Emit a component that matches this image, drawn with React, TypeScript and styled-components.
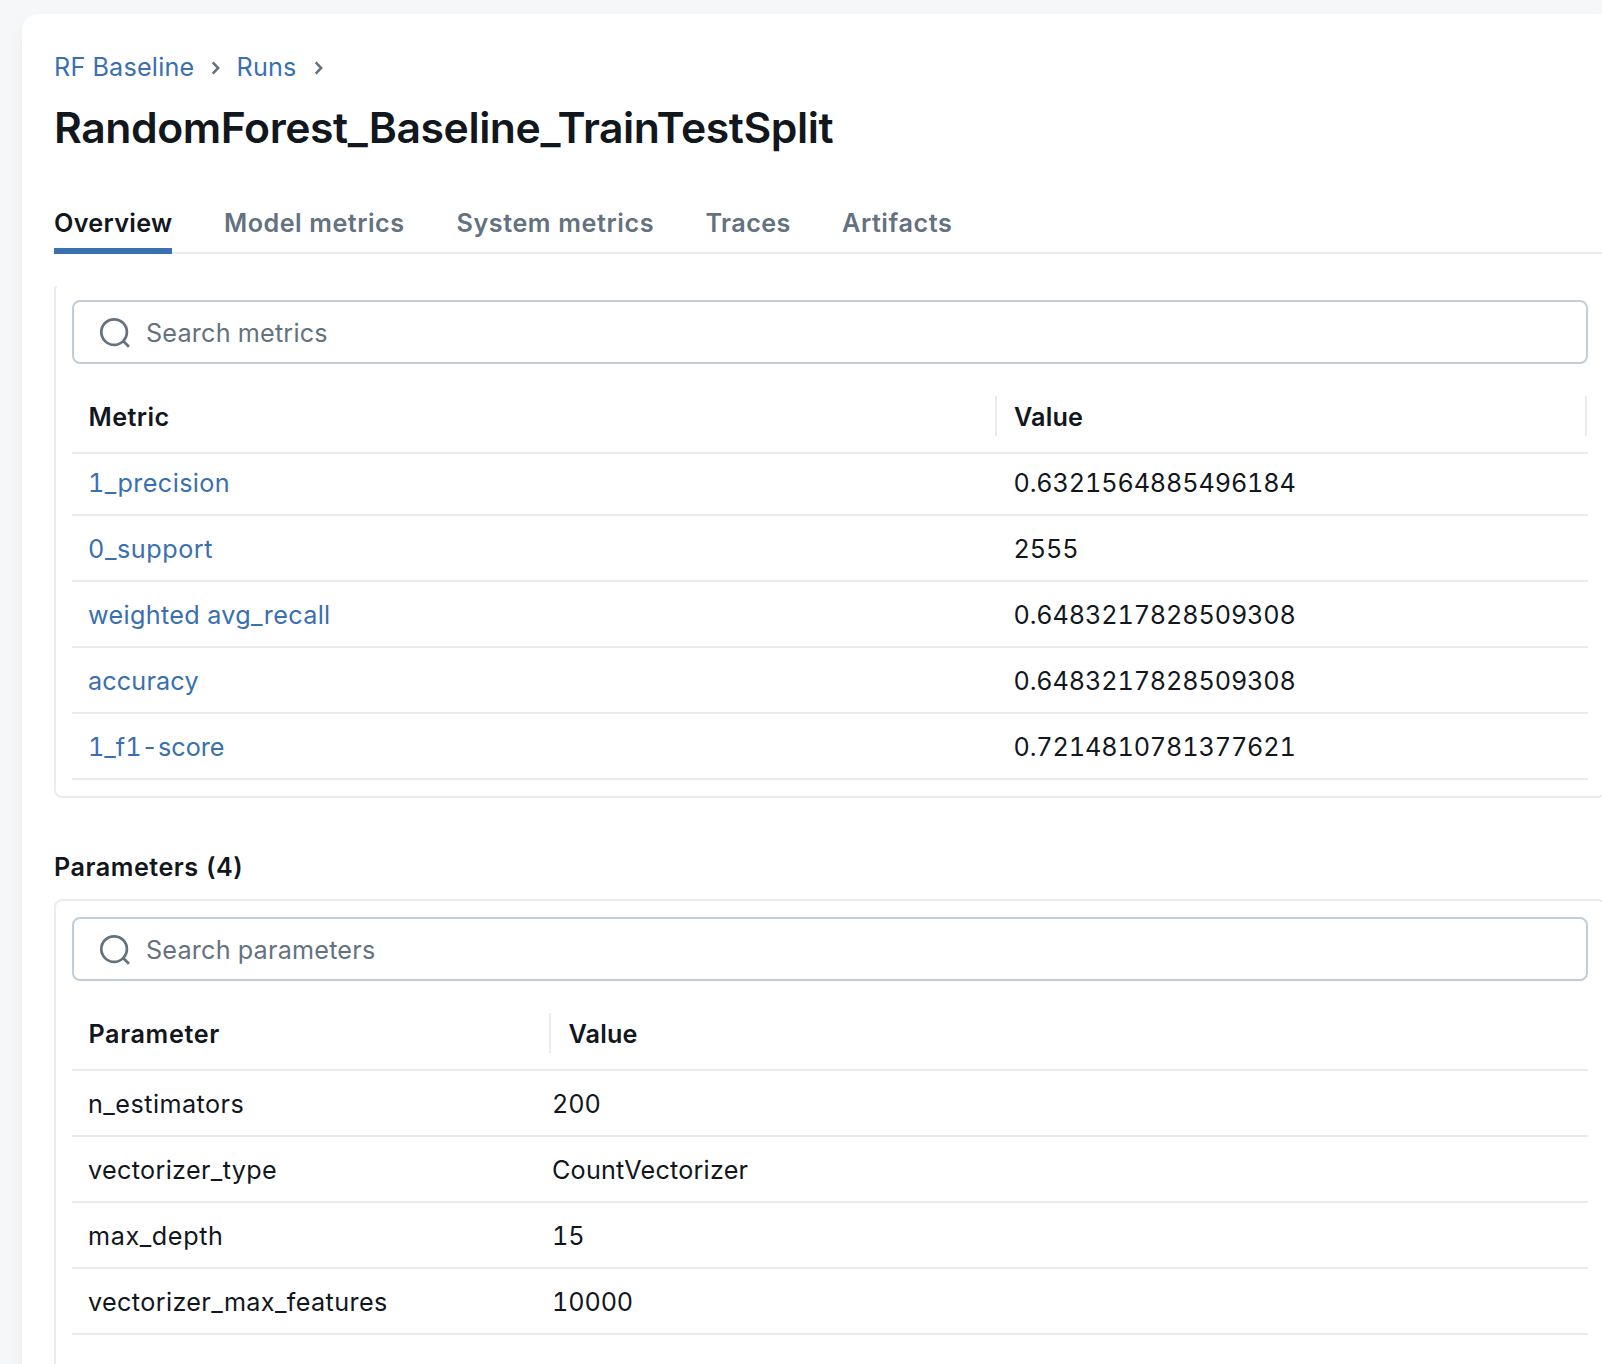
import React from "react";
import styled, { createGlobalStyle, css } from "styled-components";

const color = {
  page: "#f6f7f9",
  text: "#11171c",
  muted: "#64727f",
  link: "#3a6fb0",
  line: "#e8ecf0",
  field: "#c2cdd8",
};

const GlobalStyle = createGlobalStyle`
  * { box-sizing: border-box; }
  html, body { margin: 0; height: 100%; overflow: hidden; background: ${color.page}; }
  body {
    font-family: Inter, "Liberation Sans", sans-serif;
    font-size: 25.2px;
    color: ${color.text};
    font-variant-numeric: tabular-nums;
    white-space: nowrap;
  }
`;

const track = css<{ $track?: number }>`
  letter-spacing: ${(p) => p.$track ?? 0.2}px;
`;

const Page = styled.div`
  height: 1364px;
  padding: 14px 0 0 22px;
  overflow: hidden;
`;

const Card = styled.main`
  display: flex;
  flex-direction: column;
  height: 1400px;
  padding: 33px 0 0 32px;
  background: #fff;
  border-top-left-radius: 16px;
  box-shadow: 0 8px 16px rgba(17, 23, 28, 0.05);
`;

const Breadcrumb = styled.nav`
  display: flex;
  align-items: center;
  height: 40px;
  line-height: 40px;
`;

const Crumb = styled.a<{ $track?: number; $width: number }>`
  ${track}
  width: ${(p) => p.$width}px;
  color: ${color.link};
`;

const Chevron = styled.svg`
  width: 12px;
  height: 16px;
  margin: 2px 14.5px 0 0;
  fill: none;
  stroke: ${color.muted};
  stroke-width: 2.5;
`;

const Title = styled.h1`
  margin: 12px 0 0;
  font-size: 42.7px;
  font-weight: 600;
  line-height: 57px;
  letter-spacing: -0.426px;
`;

const Tabs = styled.div`
  display: flex;
  gap: 52px;
  margin-top: 47px;
  box-shadow: inset 0 -2px 0 ${color.line};
`;

const Tab = styled.div<{ $active?: boolean; $track?: number; $width: number }>`
  ${track}
  width: ${(p) => p.$width}px;
  padding-bottom: 5px;
  border-bottom: 6px solid ${(p) => (p.$active ? color.link : "transparent")};
  line-height: 40px;
  font-weight: 600;
  color: ${(p) => (p.$active ? color.text : color.muted)};
`;

const Scroller = styled.div`
  flex: 1;
  margin-top: 32px;
  overflow: hidden;
`;

const Panel = styled.section<{ $scrolled?: boolean }>`
  width: 1552px;
  margin-top: ${(p) => (p.$scrolled ? -4 : 12)}px;
  padding: 16px 16px ${(p) => (p.$scrolled ? 16 : 64)}px;
  border: 2px solid ${color.line};
  border-radius: 8px;
`;

const Heading = styled.h2`
  margin: 49px 0 0;
  font-size: inherit;
  font-weight: 600;
  line-height: 40px;
  letter-spacing: 0.5px;
`;

const SearchBox = styled.div`
  display: flex;
  align-items: center;
  height: 64px;
  padding-left: 24px;
  border: 2px solid ${color.field};
  border-radius: 8px;
  color: ${color.muted};
`;

const SearchSvg = styled.svg`
  width: 32px;
  height: 32px;
  margin-right: 16px;
  fill: none;
  stroke: currentColor;
  stroke-width: 2.7;
`;

const Placeholder = styled.span`
  padding-top: 2px;
  line-height: 58px;
  letter-spacing: 0.2px;
`;

const HeaderRow = styled.div`
  display: flex;
  padding: 32px 1px 16px 0;
  border-bottom: 2px solid ${color.line};
`;

const HeaderCell = styled.div<{ $track?: number; $width?: number; $divider?: boolean; $inset?: number }>`
  ${track}
  ${(p) => (p.$width ? `width: ${p.$width}px;` : "flex: 1;")}
  height: 40px;
  padding-left: ${(p) => p.$inset ?? 16.5}px;
  border-right: 2px solid ${(p) => (p.$divider ? color.line : "transparent")};
  line-height: 42px;
  font-weight: 600;
`;

const Body = styled.div<{ $scrolled?: boolean }>`
  overflow: hidden;
  & > :first-child { margin-top: ${(p) => (p.$scrolled ? -4 : 0)}px; }
`;

const Row = styled.div`
  display: flex;
  height: 66px;
  padding: 2px 0 0 16px;
  border-bottom: 2px solid ${color.line};
  line-height: 62px;
`;

const NameCell = styled.div<{ $track?: number; $width: number; $link?: boolean }>`
  ${track}
  width: ${(p) => p.$width}px;
  color: ${(p) => (p.$link ? color.link : color.text)};
`;

const ValueCell = styled.div<{ $track?: number }>`
  ${track}
`;

type Entry = { name: string; nameTrack: number; value: string; valueTrack: number };

const metrics: Entry[] = [
  { name: "1_precision", nameTrack: 0.4, value: "0.6321564885496184", valueTrack: -0.12 },
  { name: "0_support", nameTrack: 0.55, value: "2555", valueTrack: -0.12 },
  { name: "weighted avg_recall", nameTrack: 0.34, value: "0.6483217828509308", valueTrack: -0.12 },
  { name: "accuracy", nameTrack: 0.15, value: "0.6483217828509308", valueTrack: -0.12 },
  { name: "1_f1-score", nameTrack: 0.02, value: "0.7214810781377621", valueTrack: -0.12 },
];

const parameters: Entry[] = [
  { name: "n_estimators", nameTrack: 0.46, value: "200", valueTrack: -0.12 },
  { name: "vectorizer_type", nameTrack: 0.33, value: "CountVectorizer", valueTrack: 0.2 },
  { name: "max_depth", nameTrack: 0.6, value: "15", valueTrack: -0.12 },
  { name: "vectorizer_max_features", nameTrack: 0.37, value: "10000", valueTrack: -0.12 },
];

const CrumbArrow = () => (
  <Chevron viewBox="0 0 12 16">
    <path d="M2.7 2.4 8.2 8 2.7 13.6" />
  </Chevron>
);

const Search = ({ label }: { label: string }) => (
  <SearchBox>
    <SearchSvg viewBox="0 0 32 32">
      <circle cx="16.1" cy="16.1" r="12.8" />
      <path d="M24.8 24.8 31 30.8" />
    </SearchSvg>
    <Placeholder>{label}</Placeholder>
  </SearchBox>
);

export default function App() {
  return (
    <>
      <GlobalStyle />
      <Page>
        <Card>
          <Breadcrumb>
            <Crumb $width={156} $track={0.2}>RF Baseline</Crumb>
            <CrumbArrow />
            <Crumb $width={76.5} $track={0.2}>Runs</Crumb>
            <CrumbArrow />
          </Breadcrumb>
          <Title>RandomForest_Baseline_TrainTestSplit</Title>
          <Tabs>
            <Tab $active $width={118} $track={0.31}>Overview</Tab>
            <Tab $width={180.5} $track={0.47}>Model metrics</Tab>
            <Tab $width={197} $track={0.55}>System metrics</Tab>
            <Tab $width={84.5} $track={0.4}>Traces</Tab>
            <Tab $width={112} $track={0.56}>Artifacts</Tab>
          </Tabs>
          <Scroller>
            <Panel $scrolled>
              <Search label="Search metrics" />
              <HeaderRow>
                <HeaderCell $width={925} $divider $track={0.43}>Metric</HeaderCell>
                <HeaderCell $divider $inset={17} $track={0.16}>Value</HeaderCell>
              </HeaderRow>
              <Body $scrolled>
                {metrics.map((m) => (
                  <Row key={m.name}>
                    <NameCell $link $width={925.5} $track={m.nameTrack}>{m.name}</NameCell>
                    <ValueCell $track={m.valueTrack}>{m.value}</ValueCell>
                  </Row>
                ))}
              </Body>
            </Panel>
            <Heading>Parameters (4)</Heading>
            <Panel>
              <Search label="Search parameters" />
              <HeaderRow>
                <HeaderCell $width={479} $divider $track={0.6}>Parameter</HeaderCell>
                <HeaderCell $inset={17.5} $track={0.16}>Value</HeaderCell>
              </HeaderRow>
              <Body>
                {parameters.map((p) => (
                  <Row key={p.name}>
                    <NameCell $width={464} $track={p.nameTrack}>{p.name}</NameCell>
                    <ValueCell $track={p.valueTrack}>{p.value}</ValueCell>
                  </Row>
                ))}
              </Body>
            </Panel>
          </Scroller>
        </Card>
      </Page>
    </>
  );
}
